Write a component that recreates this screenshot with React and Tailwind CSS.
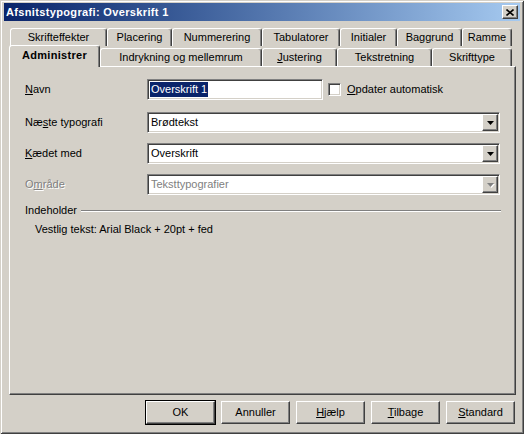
import React from 'react';

const FONT = "font-['Liberation_Sans',Arial,sans-serif]";

// classic 3D borders
const RAISED = 'border border-t-white border-l-white border-r-[#404040] border-b-[#404040] shadow-[inset_-1px_-1px_0_#808080]';
const SUNKEN = 'border border-t-[#808080] border-l-[#808080] border-r-white border-b-white shadow-[inset_1px_1px_0_#404040,inset_-1px_-1px_0_#d4d0c8]';

const ROW1 = [
  ['Skrifteffekter', 97],
  ['Placering', 65],
  ['Nummerering', 90],
  ['Tabulatorer', 78],
  ['Initialer', 57],
  ['Baggrund', 65],
  ['Ramme', 50],
];

const ROW2 = [
  ['Indrykning og mellemrum', 162],
  [<><u>J</u>ustering</>, 75],
  ['Tekstretning', 95],
  ['Skrifttype', 80],
];

const Tab = ({ children, w, className = '' }) => (
  <div
    className={`flex items-center justify-center bg-[#d4d0c8] rounded-t-[3px] border-t border-l border-r border-t-white border-l-white border-r-[#404040] shadow-[inset_-1px_0_0_#808080] ${className}`}
    style={{ width: w }}
  >
    {children}
  </div>
);

const Arrow = ({ disabled }) => (
  <svg width="7" height="4" viewBox="0 0 7 4" className={disabled ? 'drop-shadow-[1px_1px_0_#fff]' : ''}>
    <path d="M0 0h7L3.5 4z" fill={disabled ? '#808080' : '#000'} />
  </svg>
);

const Combo = ({ value, disabled }) => (
  <div className={`w-[353px] h-[21px] bg-white flex items-stretch ${SUNKEN} p-[1px]`}>
    <div className={`flex-1 flex items-center pl-[2px] ${disabled ? 'text-[#808080]' : ''}`}>{value}</div>
    <div className={`w-[16px] bg-[#d4d0c8] flex items-center justify-center ${RAISED}`}>
      <Arrow disabled={disabled} />
    </div>
  </div>
);

const Label = ({ children, disabled }) => (
  <div className={`w-[122px] ${disabled ? 'text-[#808080] [text-shadow:1px_1px_0_#fff]' : ''}`}>{children}</div>
);

const Button = ({ children, isDefault }) => (
  <div className={`w-[69px] h-[23px] ${isDefault ? 'outline outline-1 outline-black' : ''} bg-[#d4d0c8] flex items-center justify-center ${RAISED}`}>
    {children}
  </div>
);

export default function App() {
  return (
    <div className={`w-[524px] h-[434px] bg-[#d4d0c8] p-[3px] flex flex-col text-[11px] text-black ${FONT} shadow-[inset_1px_1px_0_#d4d0c8,inset_-1px_-1px_0_#404040,inset_2px_2px_0_#fff,inset_-2px_-2px_0_#808080]`}>
      {/* Title bar */}
      <div className="h-[18px] ml-[1px] mr-[1px] flex items-center justify-between pl-[2px] pr-[2px] bg-linear-to-r from-[#0a246a] to-[#a6caf0]">
        <span className="text-white font-bold tracking-[0.35px]">Afsnitstypografi: Overskrift 1</span>
        <div className={`w-[16px] h-[14px] bg-[#d4d0c8] flex items-center justify-center ${RAISED}`}>
          <svg width="8" height="7" viewBox="0 0 8 7">
            <path d="M0.5 0.5l7 6M7.5 0.5l-7 6" stroke="#000" strokeWidth="1.6" />
          </svg>
        </div>
      </div>

      {/* Tabs */}
      <div className="mt-[7px] ml-[7px] flex h-[18px]">
        {ROW1.map(([t, w]) => (
          <Tab key={t} w={w} className="h-[18px]">{t}</Tab>
        ))}
      </div>
      <div className="ml-[6px] flex items-end h-[20px]">
        <Tab w={91} className="h-[22px] -mb-[1px] relative z-10 font-bold tracking-[0.3px] pb-[2px]">Administrer</Tab>
        {ROW2.map(([t, w], i) => (
          <Tab key={i} w={w} className="h-[18px]">{t}</Tab>
        ))}
      </div>

      {/* Panel */}
      <div className="ml-[6px] w-[507px] h-[329px] border border-t-white border-l-white border-r-[#404040] border-b-[#404040] shadow-[inset_-1px_-1px_0_#808080] pl-[15px] pr-[14px] pt-[12px] flex flex-col">
        <div className="flex items-center h-[21px]">
          <Label><u>N</u>avn</Label>
          <div className={`w-[176px] h-[21px] bg-white flex items-center pl-[2px] ${SUNKEN}`}>
            <span className="bg-[#0a246a] text-white leading-[15px] px-[1px]">Overskrift 1</span>
          </div>
          <div className={`ml-[5px] w-[13px] h-[13px] bg-white ${SUNKEN}`} />
          <span className="ml-[6px]"><u>O</u>pdater automatisk</span>
        </div>
        <div className="flex items-center mt-[12px]">
          <Label>Næ<u>s</u>te typografi</Label>
          <Combo value="Brødtekst" />
        </div>
        <div className="flex items-center mt-[10px]">
          <Label><u>K</u>ædet med</Label>
          <Combo value="Overskrift" />
        </div>
        <div className="flex items-center mt-[10px]">
          <Label disabled>O<u>m</u>råde</Label>
          <Combo value="Teksttypografier" disabled />
        </div>
        <div className="flex items-center mt-[9px] h-[13px]">
          <span>Indeholder</span>
          <div className="ml-[4px] flex-1 h-[2px] border-t border-t-[#808080] border-b border-b-white" />
        </div>
        <div className="mt-[6px] ml-[10px] h-[13px] flex items-center">Vestlig tekst: Arial Black + 20pt + fed</div>
      </div>

      {/* Buttons */}
      <div className="mt-[6px] mr-[6px] flex justify-end gap-[6px]">
        <Button isDefault>OK</Button>
        <Button>Annuller</Button>
        <Button><span><u>H</u>jælp</span></Button>
        <Button><span><u>T</u>ilbage</span></Button>
        <Button><span><u>S</u>tandard</span></Button>
      </div>
    </div>
  );
}
